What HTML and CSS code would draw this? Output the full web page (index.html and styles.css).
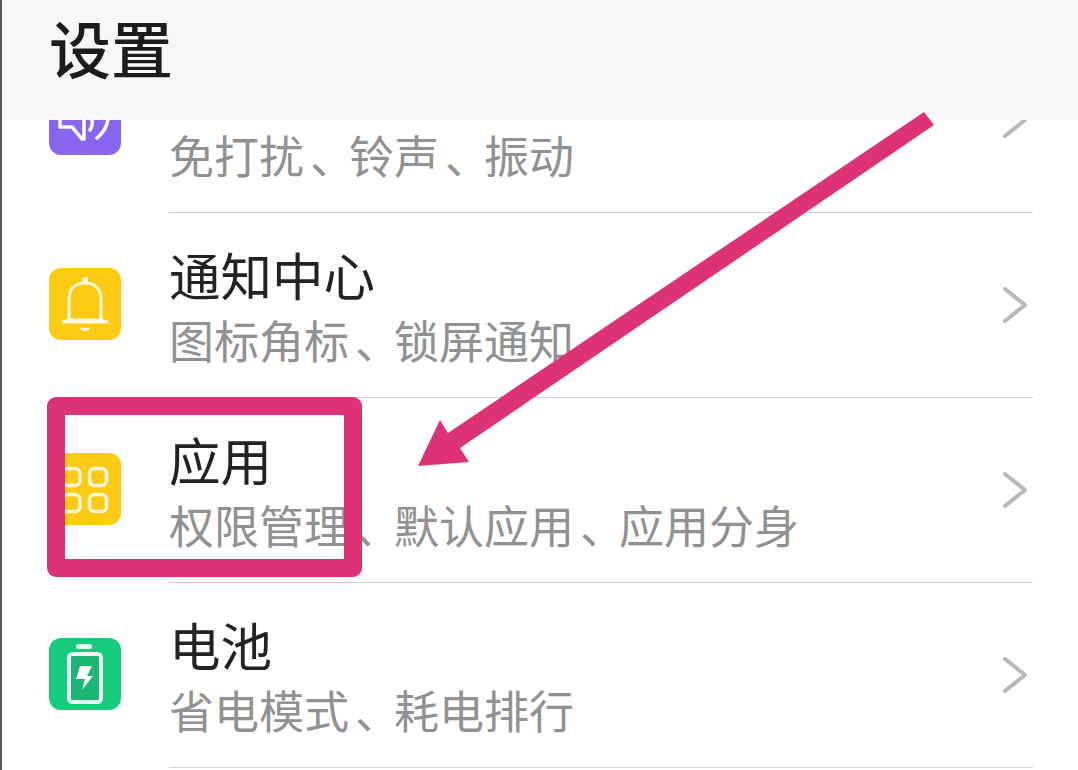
FILE: index.html
```html
<!DOCTYPE html>
<html lang="zh-CN">
<head>
<meta charset="utf-8">
<title>设置</title>
<link rel="stylesheet" href="styles.css">
</head>
<body>
<div class="page">
  <header class="topbar"><h1 class="page-title">设置</h1></header>
  <main class="list">
    <div class="row row-clipped">
      <span class="icon icon-purple">
        <svg viewBox="0 0 72 72" width="72" height="72" fill="none" stroke="#fff" stroke-width="3.5" stroke-linecap="round" stroke-linejoin="round">
          <path d="M11 20V44H23L33 56H35V20"/>
          <path d="M43 37c1 4 0 7-2 10"/>
          <path d="M59 34c0 8-4 15-11 21"/>
        </svg>
      </span>
      <div class="row-main">
        <div class="row-text"><div class="row-sub">免打扰<span class="sep">、</span>铃声<span class="sep">、</span>振动</div></div>
        <svg class="chevron" viewBox="0 0 26 38" width="26" height="38"><path d="M3 3l20 16L3 35"/></svg>
      </div>
    </div>
    <div class="row">
      <span class="icon icon-yellow">
        <svg viewBox="0 0 72 72" width="72" height="72" fill="none" stroke="#fff9e0" stroke-width="3" stroke-linejoin="round" stroke-linecap="round">
          <path d="M20 53V32c0-11 6-17 16-17s16 6 16 17v21"/>
          <path d="M14 54c3-.5 5-1 6-2h32c1 1 3 1.500 6 2z"/>
          <circle cx="36" cy="12" r="1.500" fill="#fff9e0"/>
          <path d="M31 60h10c-1 4-9 4-10 0z" fill="#fff9e0" stroke="none"/>
        </svg>
      </span>
      <div class="row-main">
        <div class="row-text">
          <div class="row-title">通知中心</div>
          <div class="row-sub">图标角标<span class="sep">、</span>锁屏通知</div>
        </div>
        <svg class="chevron" viewBox="0 0 26 38" width="26" height="38"><path d="M3 3l20 16L3 35"/></svg>
      </div>
    </div>
    <div class="row">
      <span class="icon icon-yellow">
        <svg viewBox="0 0 72 72" width="72" height="72" fill="none" stroke="#fff6d8" stroke-width="3.500">
          <rect x="14" y="15.500" width="17" height="17" rx="5"/>
          <rect x="40.500" y="15.500" width="17" height="17" rx="5"/>
          <rect x="14" y="41.500" width="17" height="17" rx="5"/>
          <rect x="40.500" y="41.500" width="17" height="17" rx="5"/>
        </svg>
      </span>
      <div class="row-main">
        <div class="row-text">
          <div class="row-title">应用</div>
          <div class="row-sub">权限管理<span class="sep">、</span>默认应用<span class="sep">、</span>应用分身</div>
        </div>
        <svg class="chevron" viewBox="0 0 26 38" width="26" height="38"><path d="M3 3l20 16L3 35"/></svg>
      </div>
    </div>
    <div class="row">
      <span class="icon icon-green">
        <svg viewBox="0 0 72 72" width="72" height="72" fill="none">
          <rect x="27" y="6" width="16" height="5" rx="2.500" fill="#e6fbf1"/>
          <rect x="20" y="16" width="32" height="48" rx="3.500" fill="#1bb672" stroke="#e6fbf1" stroke-width="4"/>
          <path d="M31 28H43L38 38H44L33 52L36 41H27Z" fill="#fff"/>
        </svg>
      </span>
      <div class="row-main">
        <div class="row-text">
          <div class="row-title">电池</div>
          <div class="row-sub">省电模式<span class="sep">、</span>耗电排行</div>
        </div>
        <svg class="chevron" viewBox="0 0 26 38" width="26" height="38"><path d="M3 3l20 16L3 35"/></svg>
      </div>
    </div>
  </main>
  <div class="mark-box"></div>
  <svg class="mark-arrow" viewBox="0 0 1078 770" width="1078" height="770">
    <path d="M924 112L934 125L460 448L469 462L418 466L440 420L448 433Z"/>
  </svg>
</div>
</body>
</html>
```
FILE: styles.css
```css
* { box-sizing: border-box; }
html, body { margin: 0; padding: 0; background: #fff; }
.page {
  position: relative;
  width: 1078px;
  height: 770px;
  overflow: hidden;
  background: #fff;
  border-left: 2px solid #5a5a5a;
  font-family: "Noto Sans CJK SC", "Noto Sans", sans-serif;
}
.topbar {
  height: 120px;
  background: #f7f7f7;
  padding: 14px 0 0 47px;
}
.page-title {
  margin: 0;
  font-size: 62px;
  line-height: 66px;
  font-weight: 500;
  color: #1c1c1c;
}
.list { display: flex; flex-direction: column; }
.row {
  height: 185px;
  padding-left: 47px;
  display: flex;
  align-items: center;
  gap: 48px;
}
.row-clipped {
  height: 93px;
  overflow: hidden;
  align-items: flex-end;
}
.row-clipped .icon { margin-bottom: 58px; }
.icon {
  flex: none;
  width: 72px;
  height: 72px;
  margin-bottom: 4px;
  border-radius: 12px;
  display: block;
}
.icon svg { display: block; }
.icon-purple { background: #8a66f0; }
.icon-yellow { background: #fecb14; }
.icon-green { background: #15cb7c; }
.row-main {
  flex: none;
  width: 864px;
  height: 100%;
  border-bottom: 1.5px solid #d2d2d2;
  display: flex;
  align-items: center;
  justify-content: space-between;
  padding-right: 5px;
}
.row-clipped .row-main { align-items: flex-end; padding-bottom: 29px; }
.row-text { display: flex; flex-direction: column; }
.row-title {
  font-size: 51.5px;
  line-height: 70px;
  color: #222;
}
.row-sub {
  font-size: 45px;
  line-height: 62px;
  color: #919191;
}
.sep { margin-left: 6px; letter-spacing: -6px; }
.row-clipped .row-sub { line-height: 56px; }
.chevron { flex: none; fill: none; stroke: #b8b8b8; stroke-width: 4; stroke-linecap: round; stroke-linejoin: round; }
.row-clipped .chevron { margin-bottom: 44px; }
.mark-box {
  position: absolute;
  left: 45px;
  top: 397px;
  width: 315px;
  height: 180px;
  border: 18px solid #dd3275;
  border-radius: 9px;
}
.mark-arrow { position: absolute; left: -2px; top: 0; fill: #dd3275; }
```
